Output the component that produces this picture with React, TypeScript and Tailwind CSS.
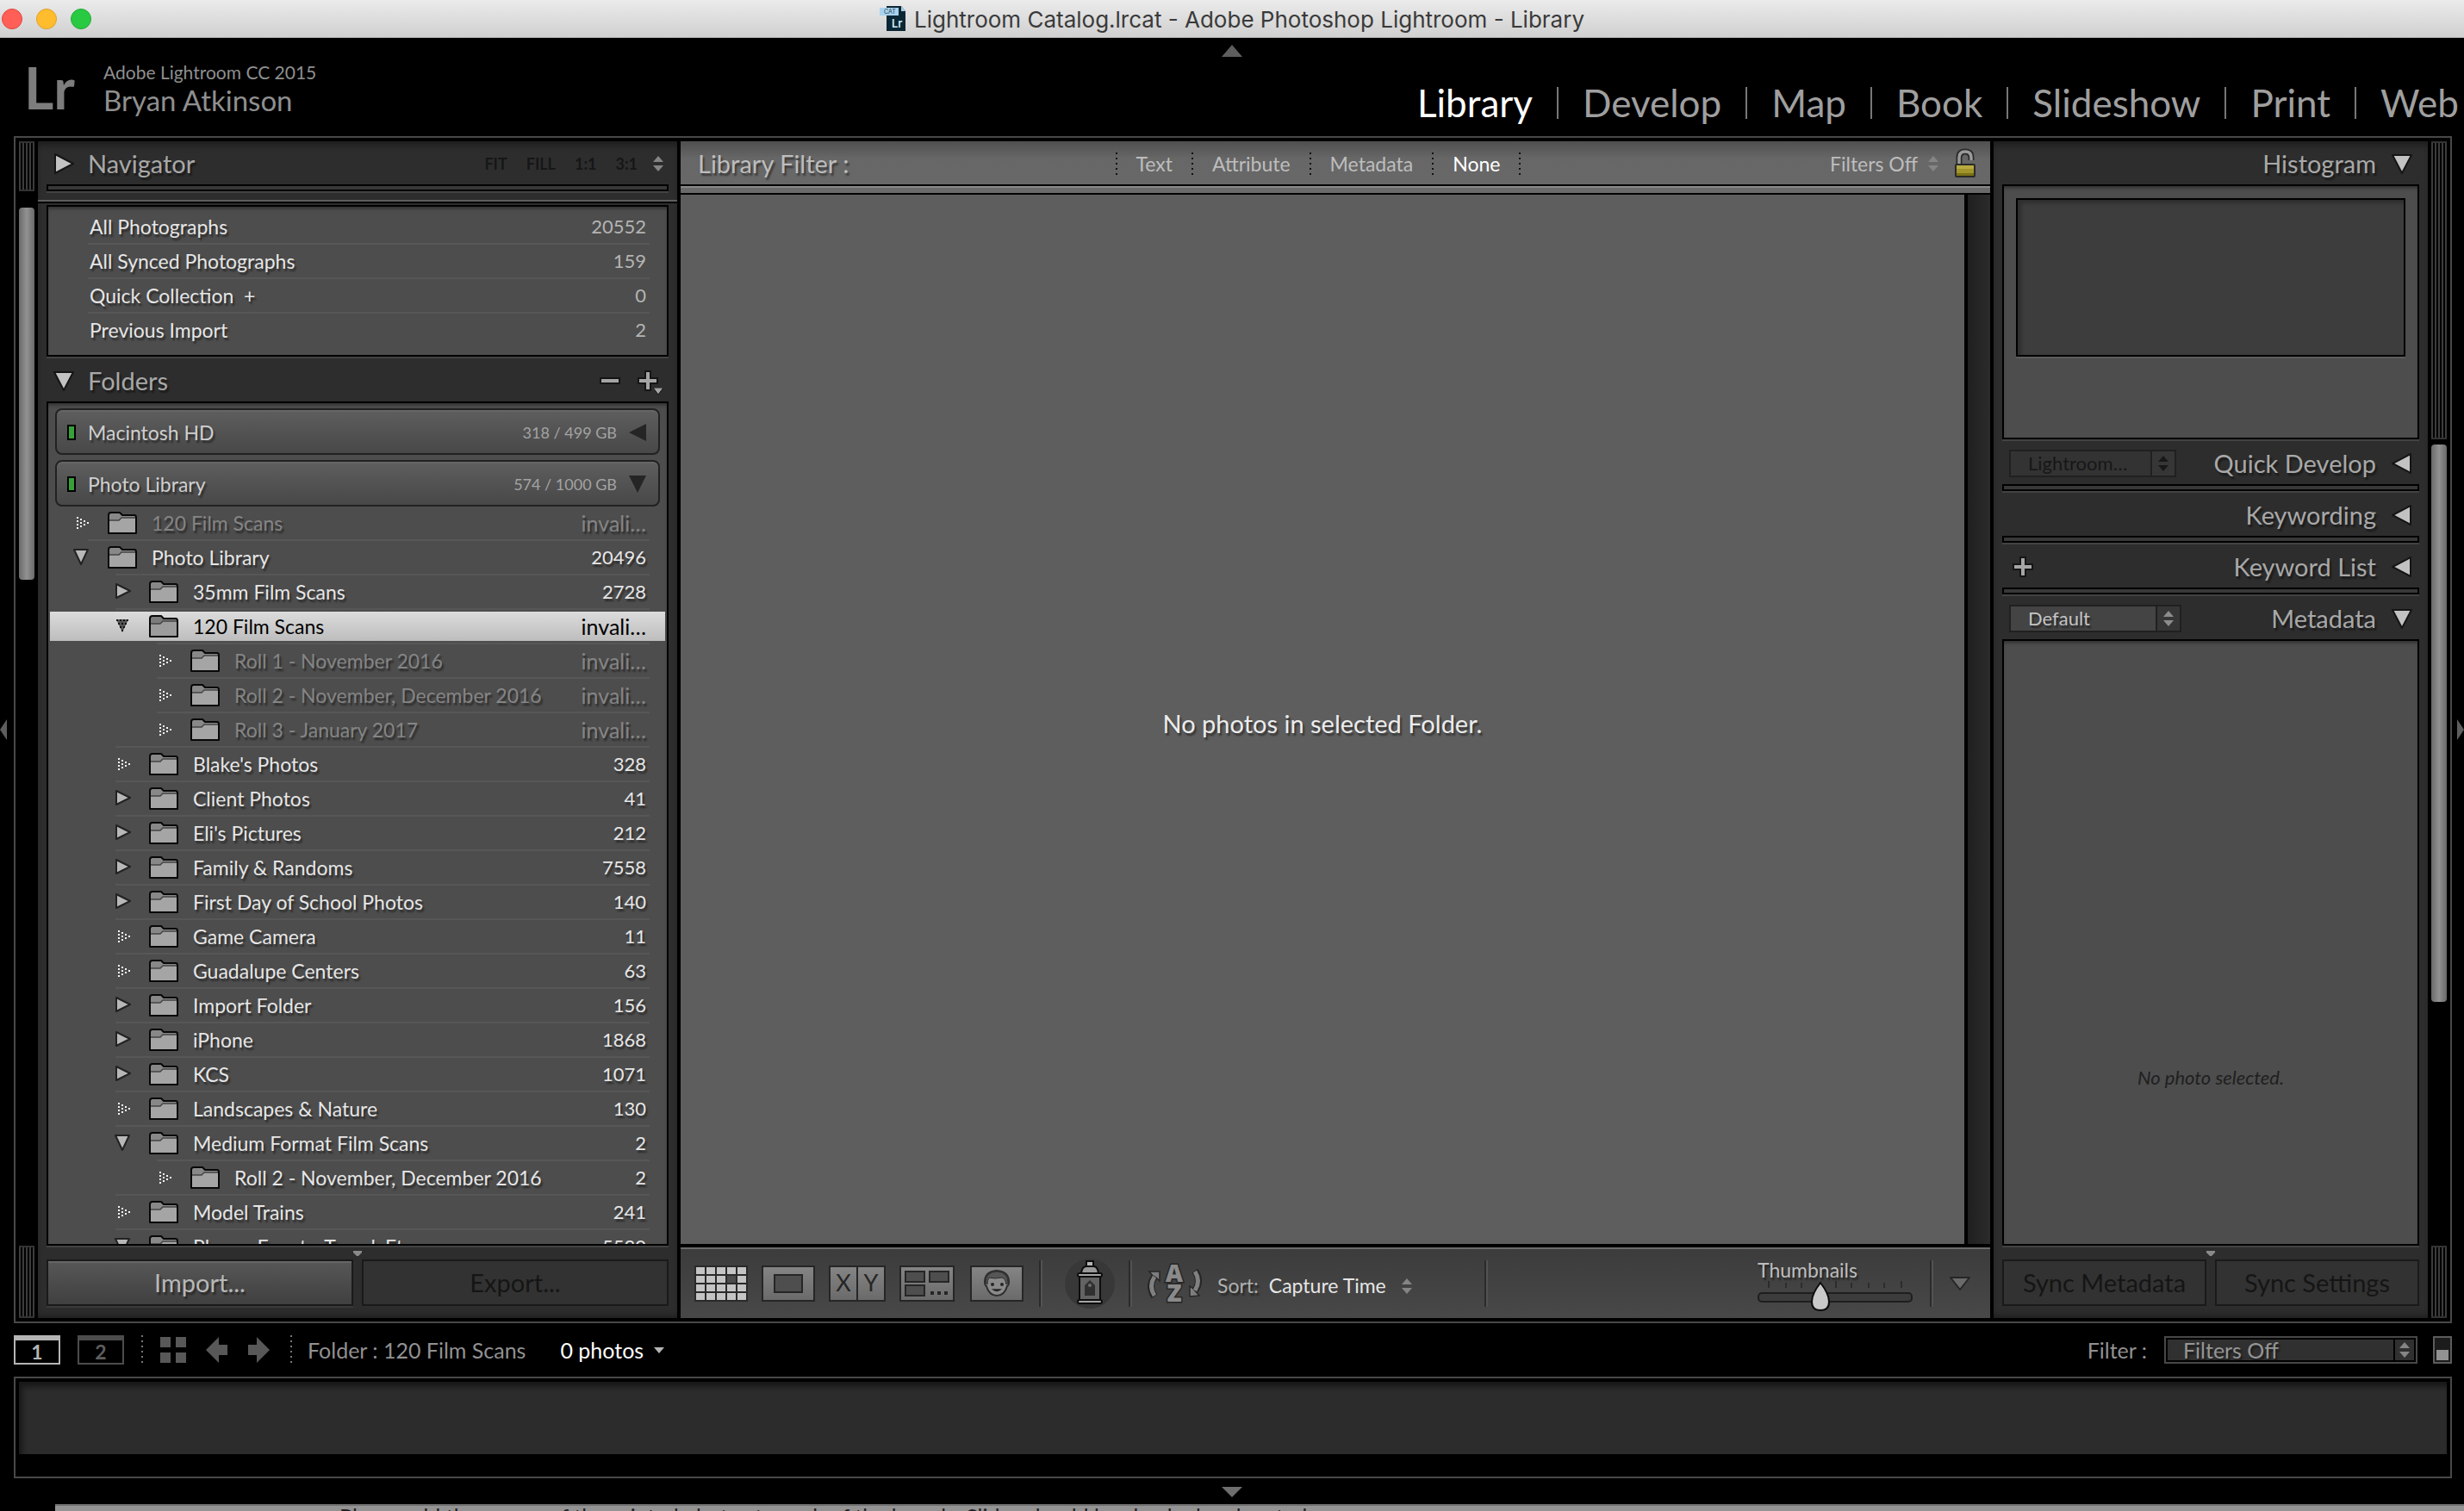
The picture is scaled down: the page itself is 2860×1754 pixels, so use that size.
import { useState } from "react";
import type { ReactNode } from "react";
import clsx from "clsx";

/* ------------------------------------------------------------------ */
/*  Data                                                               */
/* ------------------------------------------------------------------ */

const MODULES = ["Library", "Develop", "Map", "Book", "Slideshow", "Print", "Web"];

const CATALOG = [
  { name: "All Photographs", count: "20552" },
  { name: "All Synced Photographs", count: "159" },
  { name: "Quick Collection  +", count: "0" },
  { name: "Previous Import", count: "2" },
];

type Arrow = "open" | "closed" | "empty" | "emptyOpen";

interface FolderRow {
  name: string;
  count: string;
  depth: 0 | 1 | 2;
  arrow: Arrow;
  missing?: boolean;
  selected?: boolean;
}

const FOLDERS: FolderRow[] = [
  { name: "120 Film Scans", count: "invali…", depth: 0, arrow: "empty", missing: true },
  { name: "Photo Library", count: "20496", depth: 0, arrow: "open" },
  { name: "35mm Film Scans", count: "2728", depth: 1, arrow: "closed" },
  { name: "120 Film Scans", count: "invali…", depth: 1, arrow: "emptyOpen", selected: true },
  { name: "Roll 1 - November 2016", count: "invali…", depth: 2, arrow: "empty", missing: true },
  { name: "Roll 2 - November, December 2016", count: "invali…", depth: 2, arrow: "empty", missing: true },
  { name: "Roll 3 - January 2017", count: "invali…", depth: 2, arrow: "empty", missing: true },
  { name: "Blake's Photos", count: "328", depth: 1, arrow: "empty" },
  { name: "Client Photos", count: "41", depth: 1, arrow: "closed" },
  { name: "Eli's Pictures", count: "212", depth: 1, arrow: "closed" },
  { name: "Family & Randoms", count: "7558", depth: 1, arrow: "closed" },
  { name: "First Day of School Photos", count: "140", depth: 1, arrow: "closed" },
  { name: "Game Camera", count: "11", depth: 1, arrow: "empty" },
  { name: "Guadalupe Centers", count: "63", depth: 1, arrow: "empty" },
  { name: "Import Folder", count: "156", depth: 1, arrow: "closed" },
  { name: "iPhone", count: "1868", depth: 1, arrow: "closed" },
  { name: "KCS", count: "1071", depth: 1, arrow: "closed" },
  { name: "Landscapes & Nature", count: "130", depth: 1, arrow: "empty" },
  { name: "Medium Format Film Scans", count: "2", depth: 1, arrow: "open" },
  { name: "Roll 2 - November, December 2016", count: "2", depth: 2, arrow: "empty" },
  { name: "Model Trains", count: "241", depth: 1, arrow: "empty" },
  { name: "Places, Events, Travel, Etc", count: "5530", depth: 1, arrow: "open" },
];

const ROW_INDENT = ["pl-[26px]", "pl-[74px]", "pl-[122px]"];
const LINE_INDENT = ["ml-11", "ml-[76px]", "ml-[124px]"];

const SHADOW = "[text-shadow:2px_3px_2px_rgba(0,0,0,0.45)]";

/* ------------------------------------------------------------------ */
/*  Small drawings                                                     */
/* ------------------------------------------------------------------ */

function Triangle({ dir }: { dir: "right" | "down" | "left" }) {
  const points = {
    right: "2,1 23,12 2,23",
    down: "1,2 23,2 12,23",
    left: "22,1 1,12 22,23",
  }[dir];
  return (
    <svg viewBox="0 0 24 24" className="size-6 shrink-0">
      <polygon points={points} fill="#c2c2c2" stroke="#151515" strokeWidth="2" strokeLinejoin="round" />
    </svg>
  );
}

function Updown({ className }: { className?: string }) {
  return (
    <svg viewBox="0 0 12 18" className={clsx("h-[18px] w-3 shrink-0", className)} fill="currentColor">
      <polygon points="6,0 12,7 0,7" />
      <polygon points="0,11 12,11 6,18" />
    </svg>
  );
}

function RowArrow({ arrow }: { arrow: Arrow }) {
  if (arrow === "empty") {
    return (
      <svg viewBox="0 0 20 20" className="size-5 shrink-0" fill="#f4f4f4">
        {[3, 7, 11, 15].map((y) => (
          <rect key={`a${y}`} x="5" y={y} width="2" height="2" />
        ))}
        {[5, 9, 13].map((y) => (
          <rect key={`b${y}`} x="9" y={y} width="2" height="2" />
        ))}
        {[7, 11].map((y) => (
          <rect key={`c${y}`} x="13" y={y} width="2" height="2" />
        ))}
        <rect x="17" y="9" width="2" height="2" />
      </svg>
    );
  }
  if (arrow === "emptyOpen") {
    return (
      <svg viewBox="0 0 20 20" className="size-5 shrink-0">
        <polygon points="3,2 17,2 10,17" fill="#555" />
        <path d="M3 3H18M5 7H16M7 11H13M9 15H12" stroke="#111" strokeWidth="2" strokeDasharray="2 2" />
      </svg>
    );
  }
  return (
    <svg viewBox="0 0 20 20" className="size-5 shrink-0">
      <polygon
        points={arrow === "open" ? "2,1 18,1 10,18" : "3,1 19,9 3,17"}
        fill="#b8b8b8"
        stroke="#222"
        strokeWidth="2"
        strokeLinejoin="round"
      />
    </svg>
  );
}

function FolderIcon({ dim }: { dim?: boolean }) {
  return (
    <svg viewBox="0 0 34 26" className="h-[26px] w-[34px] shrink-0">
      <path d="M1 4Q1 1 4 1H14L17 4H31Q33 4 33 7V25H1Z" fill={dim ? "#7c7c7c" : "#888"} />
      <path d="M2 10H13L16 7H32V24H2Z" fill={dim ? "#9c9c9c" : "#a5a5a5"} />
      <path d="M2 10H13L16 7H32" fill="none" stroke="#444" strokeWidth="1.5" />
      <path
        d="M1 4Q1 1 4 1H14L17 4H31Q33 4 33 7V25H1Z"
        fill="none"
        stroke="#080808"
        strokeWidth="2"
        strokeLinejoin="round"
      />
    </svg>
  );
}

function PlusIcon() {
  return (
    <svg viewBox="0 0 24 24" className="size-6">
      <path d="M8 0H16V8H24V16H16V24H8V16H0V8H8Z" fill="#151515" />
      <path d="M10 2H14V10H22V14H14V22H10V14H2V10H10Z" fill="#a5a5a5" />
    </svg>
  );
}

function Hatch({ className }: { className?: string }) {
  return (
    <div
      className={clsx(
        "w-full border-y-2 border-[#333] bg-[repeating-linear-gradient(to_right,#3c3c3c_0_2px,#000_2px_4px)]",
        className
      )}
    />
  );
}

const THUMB = "w-full rounded-sm bg-linear-to-r from-[#6a6a6a] via-[#929292] to-[#6a6a6a]";

function Dots({ className }: { className?: string }) {
  return <span className={clsx("w-0.5 shrink-0", className)} />;
}

function Groove() {
  return <span className="h-[54px] w-1 shrink-0 border-r-2 border-l-2 border-r-[#525252] border-l-[#2b2b2b]" />;
}

/* ------------------------------------------------------------------ */
/*  Panel parts                                                        */
/* ------------------------------------------------------------------ */

function Box({ className, children }: { className?: string; children?: ReactNode }) {
  return (
    <div
      className={clsx(
        "mx-2.5 mb-0.5 border-2 border-black bg-[#4d4d4d] shadow-[0_2px_0_#434343,inset_0_4px_4px_-2px_rgba(0,0,0,0.4)]",
        className
      )}
    >
      {children}
    </div>
  );
}

function Bar() {
  return <div className="mx-2.5 mb-0.5 h-2 shrink-0 border-2 border-black bg-[#383838] shadow-[0_2px_0_#434343]" />;
}

function LeftHeading({ title, dir, children }: { title: string; dir: "right" | "down"; children?: ReactNode }) {
  return (
    <div className="flex h-[50px] shrink-0 items-center pt-0.5 pr-4 pl-[18px]">
      <button className="flex items-center gap-4">
        <Triangle dir={dir} />
        <h2 className={clsx("text-[29px] leading-8 text-[#a8a8a8]", SHADOW)}>{title}</h2>
      </button>
      <div className="ml-auto flex items-center">{children}</div>
    </div>
  );
}

function RightHeading({ title, dir, children }: { title: string; dir: "left" | "down"; children?: ReactNode }) {
  return (
    <div className="flex h-[50px] shrink-0 items-center pt-0.5 pr-[18px] pl-[18px]">
      {children}
      <button className="ml-auto flex items-center gap-[18px]">
        <h2 className={clsx("text-[29px] leading-8 text-[#a8a8a8]", SHADOW)}>{title}</h2>
        <Triangle dir={dir} />
      </button>
    </div>
  );
}

function HeadSelect({ label, value, disabled, className }: { label: string; value: string; disabled?: boolean; className: string }) {
  return (
    <div className={clsx("relative h-8 border-2 border-[#202020]", disabled ? "bg-[#333]" : "bg-[#444]", className)}>
      <select
        aria-label={label}
        disabled={disabled}
        className={clsx(
          "block h-full w-full appearance-none bg-transparent pr-7 pl-5 text-[22px] leading-7",
          disabled ? "text-[#171717] opacity-100" : clsx("text-[#c4c4c4]", SHADOW)
        )}
      >
        <option>{value}</option>
      </select>
      <span
        className={clsx(
          "pointer-events-none absolute inset-y-0 right-0 flex w-7 items-center justify-center border-l-2 border-[#202020] bg-[#363636]",
          disabled ? "text-[#181818]" : "text-[#8c8c8c]"
        )}
      >
        <Updown />
      </span>
    </div>
  );
}

function Drive({ name, usage, open }: { name: string; usage: string; open?: boolean }) {
  return (
    <button className="mx-1.5 mt-1.5 flex h-[54px] shrink-0 items-center rounded-lg border-2 border-[#222] bg-linear-to-b from-[#5e5e5e] to-[#484848] pt-0.5 pr-3.5 pl-3 shadow-[inset_0_2px_0_#666]">
      <span className="h-[18px] w-2.5 border-2 border-black bg-[#38a038]" />
      <span className={clsx("ml-3.5 text-[23px] leading-8 text-[#cfcfcf]", SHADOW)}>{name}</span>
      <span className="ml-auto text-[18px] leading-8 text-[#a3a3a3]">{usage}</span>
      <svg viewBox="0 0 20 20" className="ml-3.5 size-5" fill="#252525">
        <polygon points={open ? "0,0 20,0 10,20" : "20,0 20,20 0,10"} />
      </svg>
    </button>
  );
}

function TreeRow({ row, nextDepth, selected, onSelect }: { row: FolderRow; nextDepth: number; selected: boolean; onSelect: () => void }) {
  return (
    <li className="pt-0.5">
      <button
        onClick={onSelect}
        className={clsx(
          "flex h-[34px] w-full items-center pr-[22px] leading-8",
          ROW_INDENT[row.depth],
          selected && "bg-linear-to-b from-[#dcdcdc] to-[#bdbdbd] text-black",
          !selected && (row.missing ? "text-[#858585]" : "text-[#e6e6e6]"),
          !selected && SHADOW
        )}
      >
        <RowArrow arrow={row.arrow} />
        <span className="ml-[21px]">
          <FolderIcon dim={selected} />
        </span>
        <span className="ml-[17px] text-[23px]">{row.name}</span>
        <span className={clsx("ml-auto", row.count === "invali…" ? "text-[25px]" : "text-[22px]")}>{row.count}</span>
      </button>
      <div className={clsx("mt-0.5 mr-[18px] h-0.5 bg-[#575757]", LINE_INDENT[nextDepth])} />
    </li>
  );
}

function PanelButton({ children, disabled }: { children: ReactNode; disabled?: boolean }) {
  return (
    <button
      disabled={disabled}
      className={clsx(
        "h-[54px] border-2 border-[#1a1a1a] text-[29px] leading-8",
        disabled
          ? "bg-[#323232] text-[#151515]"
          : clsx("bg-linear-to-b from-[#575757] to-[#404040] text-[#b8b8b8] shadow-[0_2px_0_#3a3a3a,inset_0_2px_0_#666]", SHADOW)
      )}
    >
      {children}
    </button>
  );
}

function PanelFooter({ children }: { children: ReactNode }) {
  return (
    <div className="flex shrink-0 flex-col items-center px-2.5 pt-1 pb-3.5">
      <svg viewBox="0 0 10 6" className="mb-1 h-1.5 w-2.5">
        <polygon points="0,0 10,0 10,2 6,6 4,6 0,2" fill="#8a8a8a" />
      </svg>
      <div className="grid w-full grid-cols-2 gap-2.5">{children}</div>
    </div>
  );
}

/* ------------------------------------------------------------------ */
/*  Window sections                                                    */
/* ------------------------------------------------------------------ */

function TitleBar() {
  return (
    <div className="relative flex h-11 shrink-0 items-center justify-center border-b border-[#b5b5b5] bg-linear-to-b from-[#ebebeb] to-[#d0d0d0] font-['Inter',sans-serif]">
      <div className="absolute left-0.5 flex gap-4">
        <button aria-label="Close" className="size-6 rounded-full border border-[#e2463f] bg-[#ff5f57]" />
        <button aria-label="Minimize" className="size-6 rounded-full border border-[#e0a028] bg-[#ffbd2e]" />
        <button aria-label="Zoom" className="size-6 rounded-full border border-[#1fad34] bg-[#28ca41]" />
      </div>
      <svg viewBox="0 0 32 32" className="mr-2 size-8">
        <path d="M8 1H25L30 7V30H8Z" fill="#0b2735" />
        <path d="M25 1L30 7H25Z" fill="#a9cfe6" />
        <rect x="0" y="3" width="22" height="9" fill="#a9d3ee" />
        <text x="5" y="10" fontSize="7" fill="#24404f">CAT</text>
        <text x="14" y="26" fontSize="13" fontWeight="600" fill="#cfe9f7">Lr</text>
      </svg>
      <h1 className="pt-0.5 text-[26px] leading-8 text-[#3a3a3a]">
        Lightroom Catalog.lrcat - Adobe Photoshop Lightroom - Library
      </h1>
    </div>
  );
}

function ModuleBar() {
  const [active, setActive] = useState("Library");
  return (
    <header className="relative flex h-[114px] shrink-0 justify-between">
      <svg viewBox="0 0 24 14" className="absolute top-2 left-1/2 h-3.5 w-6 -translate-x-1/2">
        <polygon points="12,0 24,14 0,14" fill="#5e5e5e" />
      </svg>
      <div className="flex pl-7">
        <div className="w-[92px] pt-[26px] text-[66px] leading-[64px] font-bold text-[#7d7d7d]">Lr</div>
        <div className="pt-[26px] text-[#8f8f8f]">
          <div className="text-[21px] leading-7">Adobe Lightroom CC 2015</div>
          <div className="text-[33px] leading-9">Bryan Atkinson</div>
        </div>
      </div>
      <nav className="flex items-center pt-9 pr-1.5">
        {MODULES.map((name, i) => (
          <div key={name} className="flex items-center">
            {i > 0 && <span className="mx-7 h-[37px] w-0.5 bg-[#777]" />}
            <button
              onClick={() => setActive(name)}
              className={clsx("text-[44px] leading-[50px]", active === name ? "text-white" : "text-[#9f9f9f]")}
            >
              {name}
            </button>
          </div>
        ))}
      </nav>
    </header>
  );
}

function LeftPanel() {
  const [selected, setSelected] = useState(FOLDERS.findIndex((f) => f.selected));
  return (
    <aside className="flex w-[742px] shrink-0 flex-col bg-[#2d2d2d] shadow-[inset_0_10px_10px_-6px_rgba(0,0,0,0.4),inset_0_-8px_8px_-6px_rgba(0,0,0,0.4)]">
      <LeftHeading title="Navigator" dir="right">
        <div className="flex items-center gap-[22px] text-[18px] leading-6 font-bold text-[#161616] [text-shadow:1px_2px_1px_rgba(0,0,0,0.4)]">
          <button>FIT</button>
          <button>FILL</button>
          <button>1:1</button>
          <button>3:1</button>
        </div>
        <Updown className="ml-[18px] text-[#858585]" />
      </LeftHeading>
      <Bar />
      <div className="mt-2 mb-0.5 h-1 shrink-0 border-t-2 border-b-2 border-t-[#5e5e5e] border-b-black" />
      <Box className="shrink-0 pt-1 pb-2">
        <ul>
          {CATALOG.map((item, i) => (
            <li key={item.name} className="pt-0.5">
              <button className="flex h-[34px] w-full items-center justify-between pr-6 pl-12 leading-8">
                <span className={clsx("text-[23px] whitespace-pre text-[#e6e6e6]", SHADOW)}>{item.name}</span>
                <span className="text-[22px] text-[#b4b4b4]">{item.count}</span>
              </button>
              <div className={clsx("mt-0.5 mr-5 ml-[46px] h-0.5", i < CATALOG.length - 1 && "bg-[#575757]")} />
            </li>
          ))}
        </ul>
      </Box>
      <LeftHeading title="Folders" dir="down">
        <button aria-label="Remove folder">
          <svg viewBox="0 0 24 8" className="h-2 w-6">
            <rect width="24" height="8" fill="#151515" />
            <rect x="2" y="2" width="20" height="4" fill="#a5a5a5" />
          </svg>
        </button>
        <button aria-label="Add folder" className="ml-5 flex items-end">
          <PlusIcon />
          <svg viewBox="0 0 12 8" className="-mb-1 -ml-1.5 h-2 w-3">
            <polygon points="0,0 12,0 6,8" fill="#a5a5a5" stroke="#151515" />
          </svg>
        </button>
      </LeftHeading>
      <Box className="flex min-h-0 flex-1 flex-col overflow-hidden px-0.5">
        <Drive name="Macintosh HD" usage="318 / 499 GB" />
        <Drive name="Photo Library" usage="574 / 1000 GB" open />
        <ul>
          {FOLDERS.map((row, i) => (
            <TreeRow
              key={i}
              row={row}
              nextDepth={FOLDERS[i + 1]?.depth ?? row.depth}
              selected={i === selected}
              onSelect={() => setSelected(i)}
            />
          ))}
        </ul>
      </Box>
      <PanelFooter>
        <PanelButton>Import...</PanelButton>
        <PanelButton disabled>Export...</PanelButton>
      </PanelFooter>
    </aside>
  );
}

function FilterBar() {
  const dots = "h-[26px] bg-[repeating-linear-gradient(to_bottom,#111_0_2px,transparent_2px_6px)]";
  return (
    <div className={clsx("flex h-[50px] shrink-0 items-center bg-linear-to-b from-[#505050] via-[#676767] via-40% to-[#686868] pt-0.5 pr-4 pl-5 text-[#bdbdbd]", SHADOW)}>
      <div className="flex-1 basis-0 text-[29px] leading-8">Library Filter :</div>
      <div className="flex items-center text-[23px] leading-8">
        <Dots className={dots} />
        {["Text", "Attribute", "Metadata", "None"].map((tab) => (
          <div key={tab} className="flex items-center">
            <button className={clsx("px-[22px]", tab === "None" && "text-white")}>{tab}</button>
            <Dots className={dots} />
          </div>
        ))}
      </div>
      <button className="flex flex-1 basis-0 items-center justify-end gap-3 pr-2 text-[23px] leading-8">
        Filters Off
        <Updown className="text-[#858585]" />
      </button>
      <button aria-label="Lock filters" className="flex w-9 justify-end">
        <svg viewBox="0 0 26 36" className="h-9 w-[26px]">
          <path d="M6 19V11Q6 4 13 4Q20 4 20 11V14" fill="none" stroke="#2a2a2a" strokeWidth="7" />
          <path d="M6 19V11Q6 4 13 4Q20 4 20 11V14" fill="none" stroke="#9a9a9a" strokeWidth="3.5" />
          <rect x="1" y="18" width="24" height="16" rx="2" fill="#2a2a2a" />
          <rect x="3" y="20" width="20" height="12" fill="#a1942b" />
          <rect x="3" y="20" width="20" height="4" fill="#b8aa40" />
          <rect x="3" y="29" width="20" height="3" fill="#7c7014" />
        </svg>
      </button>
    </div>
  );
}

function ViewIcons() {
  const frame = { fill: "url(#face)", stroke: "#262626", strokeWidth: 2 };
  return (
    <>
      <button aria-label="Grid view">
        <svg viewBox="0 0 62 42" className="h-[42px] w-[62px]">
          <defs>
            <linearGradient id="face" x1="0" y1="0" x2="0" y2="1">
              <stop offset="0" stopColor="#858585" />
              <stop offset="1" stopColor="#6a6a6a" />
            </linearGradient>
          </defs>
          <rect width="62" height="42" fill="#2a2a2a" />
          {[0, 1, 2, 3].map((r) =>
            [0, 1, 2, 3, 4].map((c) => (
              <rect
                key={`${r}${c}`}
                x={2 + c * 12}
                y={2 + r * 10}
                width="10"
                height="8"
                fill={r === 1 && c === 3 ? "#4c4c4c" : "#c4c4c4"}
              />
            ))
          )}
        </svg>
      </button>
      <button aria-label="Loupe view" className="ml-4">
        <svg viewBox="0 0 62 42" className="h-[42px] w-[62px]">
          <rect x="1" y="1" width="60" height="40" {...frame} />
          <rect x="15" y="11" width="32" height="20" fill="#4e4e4e" stroke="#262626" strokeWidth="2" />
        </svg>
      </button>
      <button aria-label="Compare view" className="ml-4">
        <svg viewBox="0 0 66 42" className="h-[42px] w-[66px]">
          <rect x="1" y="1" width="64" height="40" {...frame} />
          <path d="M33 1V41" stroke="#262626" strokeWidth="2" />
          <text x="17" y="30" textAnchor="middle" fontSize="27" fill="#262626">X</text>
          <text x="49" y="30" textAnchor="middle" fontSize="27" fill="#262626">Y</text>
        </svg>
      </button>
      <button aria-label="Survey view" className="ml-4">
        <svg viewBox="0 0 64 42" className="h-[42px] w-16">
          <rect x="1" y="1" width="62" height="40" {...frame} />
          <g fill="#4e4e4e" stroke="#262626" strokeWidth="2">
            <rect x="7" y="7" width="22" height="12" />
            <rect x="35" y="7" width="22" height="12" />
            <rect x="7" y="23" width="22" height="12" />
          </g>
          <path d="M36 32H40M44 32H48M52 32H56" stroke="#262626" strokeWidth="4" />
        </svg>
      </button>
      <button aria-label="People view" className="ml-[18px]">
        <svg viewBox="0 0 62 42" className="h-[42px] w-[62px]">
          <rect x="1" y="1" width="60" height="40" {...frame} />
          <path
            d="M31 6Q45 7 45 19Q45 23 43 24Q40 35 31 35Q22 35 19 24Q17 23 17 19Q17 7 31 6Z"
            fill="#8a8a8a"
            stroke="#2e2e2e"
            strokeWidth="2"
          />
          <path
            d="M31 7Q44 8 44 20L42 22Q41 15 37 14Q28 16 22 14Q20 17 20 22L18 20Q18 8 31 7Z"
            fill="#565656"
            stroke="#2e2e2e"
          />
          <circle cx="26" cy="22" r="2" fill="#262626" />
          <circle cx="37" cy="22" r="2" fill="#262626" />
          <path d="M27 28Q31 31 35 28Z" fill="#262626" stroke="#262626" strokeWidth="1.5" />
        </svg>
      </button>
    </>
  );
}

function Toolbar() {
  return (
    <div className="flex h-[82px] shrink-0 items-center border-t-2 border-[#6c6c6c] bg-linear-to-b from-[#3c3c3c] to-[#484848] pr-[22px] pl-4 text-[23px] leading-8">
      <ViewIcons />
      <span className="ml-[18px] flex">
        <Groove />
      </span>
      <button aria-label="Painter" className="mx-4 ml-[26px]">
        <svg viewBox="0 0 58 58" className="size-[58px]">
          <circle cx="29" cy="29" r="29" fill="#383838" />
          <g stroke="#0d0d0d" strokeWidth="2">
            <rect x="25" y="3" width="8" height="8" fill="#b5b5b5" />
            <path d="M19 17Q20 9 25 9H33Q38 9 39 17Z" fill="#999" />
            <rect x="17" y="20" width="24" height="30" fill="#636363" />
            <rect x="15" y="17" width="28" height="4" rx="2" fill="#a5a5a5" />
            <rect x="15" y="48" width="28" height="4" rx="2" fill="#a5a5a5" />
          </g>
          <path d="M23 43V31L29 25L35 31V43Z" fill="#303030" />
          <circle cx="29" cy="31" r="2" fill="#6d6d6d" />
        </svg>
      </button>
      <Groove />
      <button aria-label="Sort direction" className="ml-[18px]">
        <svg viewBox="0 0 62 46" className="h-[46px] w-[62px] overflow-visible">
          <g fill="none" stroke="#262626" strokeWidth="8">
            <path d="M8 38Q0 26 8 15" />
            <path d="M55 8Q63 20 55 31" />
          </g>
          <g fill="#7d7d7d" stroke="#262626" strokeWidth="1.5">
            <path d="M2 9H14V20L10 16L6 14Z" />
            <path d="M49 38V26L53 29L60 37Z" />
          </g>
          <g fill="none" stroke="#808080" strokeWidth="5">
            <path d="M8 37Q1 26 8 15" />
            <path d="M55 9Q62 20 55 31" />
          </g>
          <g
            className="font-['Open_Sans',sans-serif] font-extrabold"
            fontSize="28"
            textAnchor="middle"
            fill="#8a8a8a"
            stroke="#262626"
            strokeWidth="3"
            paintOrder="stroke"
          >
            <text x="31" y="21">A</text>
            <text x="31" y="44">Z</text>
          </g>
        </svg>
      </button>
      <label htmlFor="sort" className={clsx("ml-[19px] pt-1 text-[#b0b0b0]", SHADOW)}>
        Sort:
      </label>
      <div className="relative ml-3 pt-1">
        <select id="sort" className="block w-[166px] appearance-none bg-transparent text-[#e6e6e6]">
          <option>Capture Time</option>
        </select>
        <Updown className="pointer-events-none absolute top-3 right-0 text-[#858585]" />
      </div>
      <span className="ml-[84px] flex">
        <Groove />
      </span>
      <div className="ml-auto w-[180px] pt-1">
        <label htmlFor="thumbs" className={clsx("block leading-6 text-[#bdbdbd]", SHADOW)}>
          Thumbnails
        </label>
        <div className="relative h-9">
          <svg viewBox="0 0 180 36" className="block h-9 w-full">
            <path
              d="M13 1V9M33 3V9M51 3V9M91 1V9M109 3V9M129 3V9M147 3V9M167 1V9"
              stroke="#2c2c2c"
              strokeWidth="2"
            />
            <rect x="1" y="15" width="178" height="10" rx="4" fill="#3c3c3c" stroke="#1e1e1e" strokeWidth="2" />
            <path d="M73 3Q83 16 83 25Q83 35 73 35Q63 35 63 25Q63 16 73 3Z" fill="#c9c9c9" stroke="#0c0c0c" strokeWidth="2" />
          </svg>
          <input id="thumbs" type="range" defaultValue={40} className="absolute inset-0 w-full opacity-0" />
        </div>
      </div>
      <span className="mr-[18px] ml-5 flex">
        <Groove />
      </span>
      <button aria-label="Toolbar options">
        <svg viewBox="0 0 26 18" className="h-[18px] w-[26px]">
          <polygon points="2,2 24,2 13,16" fill="#6a6a6a" stroke="#262626" strokeWidth="2" strokeLinejoin="round" />
        </svg>
      </button>
    </div>
  );
}

function CenterPanel() {
  return (
    <main className="flex min-w-0 flex-1 flex-col">
      <FilterBar />
      <div className="h-3 shrink-0 border-y-2 border-black bg-[#6a6a6a] shadow-[inset_0_2px_0_#8a8a8a]" />
      <div className="flex min-h-0 flex-1">
        <div className="flex flex-1 items-center justify-center bg-[#5e5e5e] pt-2.5">
          <p className={clsx("text-[29px] leading-10 text-[#ececec]", SHADOW)}>No photos in selected Folder.</p>
        </div>
        <div className="w-[30px] border-l-4 border-black bg-linear-to-r from-[#202020] to-[#2b2b2b]" />
      </div>
      <div className="h-1 shrink-0 bg-black" />
      <Toolbar />
    </main>
  );
}

function RightPanel() {
  return (
    <aside className="flex w-[504px] shrink-0 flex-col bg-[#2d2d2d] shadow-[inset_0_10px_10px_-6px_rgba(0,0,0,0.4),inset_0_-8px_8px_-6px_rgba(0,0,0,0.4)]">
      <RightHeading title="Histogram" dir="down" />
      <Box className="h-[296px] shrink-0 p-3.5">
        <div className="h-[184px] border-2 border-black bg-[#3d3d3d] shadow-[0_2px_0_#5c5c5c,inset_4px_4px_4px_rgba(0,0,0,0.25)]" />
      </Box>
      <RightHeading title="Quick Develop" dir="left">
        <HeadSelect label="Saved preset" value="Lightroom…" disabled className="w-[194px]" />
      </RightHeading>
      <Bar />
      <RightHeading title="Keywording" dir="left" />
      <Bar />
      <RightHeading title="Keyword List" dir="left">
        <button aria-label="Add keyword" className="ml-1">
          <PlusIcon />
        </button>
      </RightHeading>
      <Bar />
      <RightHeading title="Metadata" dir="down">
        <HeadSelect label="Metadata set" value="Default" className="w-[200px]" />
      </RightHeading>
      <Box className="min-h-0 flex-1 overflow-hidden pt-[495px] text-center">
        <p className="text-[22px] leading-6 text-[#202020] italic">No photo selected.</p>
      </Box>
      <PanelFooter>
        <PanelButton disabled>Sync Metadata</PanelButton>
        <PanelButton disabled>Sync Settings</PanelButton>
      </PanelFooter>
    </aside>
  );
}

function InfoBar() {
  const dots = "h-[34px] bg-[repeating-linear-gradient(to_bottom,#777_0_2px,transparent_2px_6px)]";
  return (
    <div className="mr-3.5 ml-4 flex h-[62px] shrink-0 items-center text-[25px] leading-8 text-[#919191]">
      <button className="flex h-[34px] w-[54px] items-center justify-center border-2 border-t-[6px] border-[#b5b5b5] text-[23px] leading-6 font-bold text-[#b5b5b5]">
        1
      </button>
      <button className="ml-5 flex h-[34px] w-[54px] items-center justify-center border-2 border-t-[6px] border-[#4c4c4c] text-[23px] leading-6 font-bold text-[#5e5e5e]">
        2
      </button>
      <Dots className={clsx("ml-5", dots)} />
      <button aria-label="Go to grid" className="ml-5">
        <svg viewBox="0 0 30 30" className="size-[30px]" fill="#585858">
          <path d="M0 0H12V12H0ZM18 0H30V12H18ZM0 18H12V30H0ZM18 18H30V30H18Z" />
        </svg>
      </button>
      <button aria-label="Go back" className="ml-[23px]">
        <svg viewBox="0 0 25 30" className="h-[30px] w-[25px]" fill="#585858">
          <path d="M0 15L15 0V9H25V21H15V30Z" />
        </svg>
      </button>
      <button aria-label="Go forward" className="ml-6">
        <svg viewBox="0 0 25 30" className="h-[30px] w-[25px]" fill="#585858">
          <path d="M25 15L10 0V9H0V21H10V30Z" />
        </svg>
      </button>
      <Dots className={clsx("ml-6", dots)} />
      <span className="ml-[18px]">Folder : 120 Film Scans</span>
      <button className="ml-10 flex items-center gap-3 text-white">
        0 photos
        <svg viewBox="0 0 12 7" className="h-[7px] w-3" fill="#b5b5b5">
          <polygon points="0,0 12,0 6,7" />
        </svg>
      </button>
      <label htmlFor="filter" className="mr-5 ml-auto">
        Filter :
      </label>
      <div className="relative h-8 w-[294px] border-2 border-[#484848] bg-black p-0.5">
        <select
          id="filter"
          className={clsx("block h-6 w-full appearance-none bg-[#303030] pl-[18px] leading-6 text-[#959595]", SHADOW)}
        >
          <option>Filters Off</option>
        </select>
        <span className="pointer-events-none absolute inset-y-0.5 right-0.5 flex w-6 items-center justify-center border-l-2 border-black bg-[#303030]">
          <Updown className="text-[#858585]" />
        </span>
      </div>
      <button aria-label="Toggle filters" className="ml-[18px] flex h-8 w-[22px] items-end border-2 border-[#5c5c5c] bg-[#1c1c1c] p-0.5">
        <span className="h-3 w-full bg-[#929292]" />
      </button>
    </div>
  );
}

/* ------------------------------------------------------------------ */
/*  App                                                                */
/* ------------------------------------------------------------------ */

export default function App() {
  return (
    <div className="flex h-screen flex-col overflow-hidden bg-black font-['Lato',sans-serif]">
      <TitleBar />
      <ModuleBar />

      <div className="relative flex min-h-0 flex-1 pr-3.5 pl-4">
        <svg viewBox="0 0 8 24" className="absolute top-1/2 left-0 h-6 w-2 -translate-y-1/2">
          <polygon points="8,0 8,24 0,12" fill="#5e5e5e" />
        </svg>
        <svg viewBox="0 0 8 24" className="absolute top-1/2 right-0 h-6 w-2 -translate-y-1/2">
          <polygon points="0,0 0,24 8,12" fill="#5e5e5e" />
        </svg>
        <div className="flex min-h-0 flex-1 gap-1 border-2 border-[#484848] p-1">
          <div className="flex w-[18px] shrink-0 flex-col">
            <Hatch className="h-[58px]" />
            <div className={clsx("mt-[19px] h-[432px]", THUMB)} />
            <Hatch className="mt-auto h-[84px]" />
          </div>
          <LeftPanel />
          <CenterPanel />
          <RightPanel />
          <div className="flex w-[18px] shrink-0 flex-col">
            <Hatch className="h-[346px]" />
            <div className={clsx("mt-1.5 h-[647px]", THUMB)} />
            <Hatch className="mt-auto h-[84px]" />
          </div>
        </div>
      </div>

      <InfoBar />

      <div className="mr-3.5 ml-4 h-[118px] shrink-0 border-2 border-[#484848] p-1">
        <div className="h-[84px] bg-[#2c2c2c] shadow-[inset_4px_6px_6px_rgba(0,0,0,0.45)]" />
      </div>
      <div className="flex h-[30px] shrink-0 items-center justify-center pt-px">
        <svg viewBox="0 0 24 12" className="h-3 w-6">
          <polygon points="0,0 24,0 12,12" fill="#6e6e6e" />
        </svg>
      </div>

      {/* Edge of the window behind */}
      <div className="h-2 shrink-0 overflow-hidden pl-16">
        <div className="flex h-8 border-t-2 border-[#707070] bg-[#939393] pl-[330px] text-[25px] leading-6 text-[#222]">
          Please add the names of the printed photos to each of the boards. Slides should be checked and sorted
        </div>
      </div>
    </div>
  );
}
